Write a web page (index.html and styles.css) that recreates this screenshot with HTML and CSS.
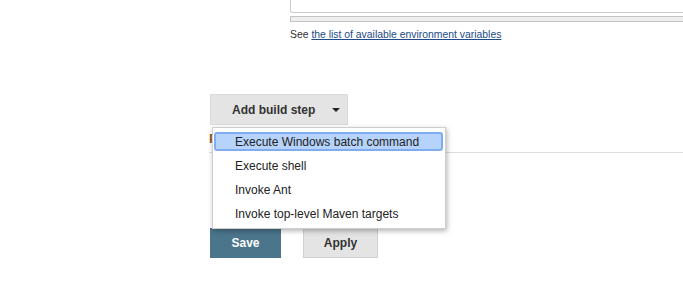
FILE: index.html
```html
<!DOCTYPE html>
<html lang="en">
<head>
  <meta charset="UTF-8">
  <title>Configure - Build</title>
  <link rel="stylesheet" href="styles.css">
</head>
<body>

  <div id="main">

    <div class="env">
      <div class="env-textarea"></div>
      <div class="env-resize"></div>
      <p class="hint">See <a href="#">the list of available environment variables</a></p>
    </div>

    <div class="builder">
      <div class="dropdown">
        <button class="add-step">Add build step<span class="caret"></span></button>
        <ul class="menu">
          <li class="active">Execute Windows batch command</li>
          <li>Execute shell</li>
          <li>Invoke Ant</li>
          <li>Invoke top-level Maven targets</li>
        </ul>
      </div>
    </div>

    <div class="section-head">Post-build Actions</div>

    <div class="actions">
      <button class="btn btn-save">Save</button>
      <button class="btn btn-apply">Apply</button>
    </div>

  </div>

</body>
</html>
```

FILE: styles.css
```css
*{
  margin: 0;
  padding: 0;
  box-sizing: border-box;
}

body{
  width: 683px;
  overflow: hidden;
  background-color: #ffffff;
  font-family: "Liberation Sans", Arial, sans-serif;
  color: #333333;
}

#main{
  width: 683px;
}

.env{
  margin-left: 290px;
}

.env-textarea{
  width: 420px;
  height: 13px;
  border: 1px solid #cccccc;
  border-top: none;
  border-bottom-left-radius: 3px;
}

.env-resize{
  width: 420px;
  height: 6px;
  margin-top: 3px;
  border: 1px solid #c4c4c4;
  background-color: #eeeeee;
}

.hint{
  margin-top: 6px;
  font-size: 10.4px;
  line-height: 14px;
  color: #333333;
}

.hint a{
  color: #204a87;
}

.builder{
  margin: 52px 0 0 210px;
}

.dropdown{
  position: relative;
  display: inline-block;
}

.add-step{
  display: flex;
  align-items: center;
  width: 138px;
  height: 31px;
  padding-left: 21px;
  border: 1px solid #dadada;
  background-color: #e4e4e4;
  font: bold 12px "Liberation Sans", Arial, sans-serif;
  color: #333333;
}

.caret{
  width: 0;
  height: 0;
  margin-left: 17px;
  border-left: 4px solid transparent;
  border-right: 4px solid transparent;
  border-top: 4px solid #222222;
}

.menu{
  position: absolute;
  top: 33px;
  left: 2px;
  z-index: 2;
  width: 234px;
  padding: 2px 0 2px;
  list-style: none;
  background-color: #ffffff;
  border: 1px solid #cfcfcf;
  box-shadow: 1px 2px 5px rgba(0, 0, 0, 0.3);
}

.menu li{
  height: 24px;
  padding-left: 22px;
  font-size: 12px;
  line-height: 24px;
  color: #222222;
  white-space: nowrap;
}

.menu li.active{
  margin: 2px 2px 3px 1px;
  height: 19px;
  padding-left: 19px;
  line-height: 16px;
  border: 2px solid #7fabef;
  border-radius: 3px;
  background-color: #b5d3fb;
}

.section-head{
  margin: 5px 0 0 209px;
  height: 23px;
  border-bottom: 1px solid #dddddd;
  font: bold 13px "Liberation Sans", Arial, sans-serif;
  line-height: 18px;
  color: #8b5a2b;
}

.actions{
  display: flex;
  gap: 22px;
  margin: 75px 0 0 210px;
}

.btn{
  height: 30px;
  font: bold 12px "Liberation Sans", Arial, sans-serif;
}

.btn-save{
  width: 71px;
  border: none;
  background-color: #4b758b;
  color: #ffffff;
}

.btn-apply{
  width: 75px;
  border: 1px solid #d0d0d0;
  background-color: #e4e4e4;
  color: #333333;
}
```
